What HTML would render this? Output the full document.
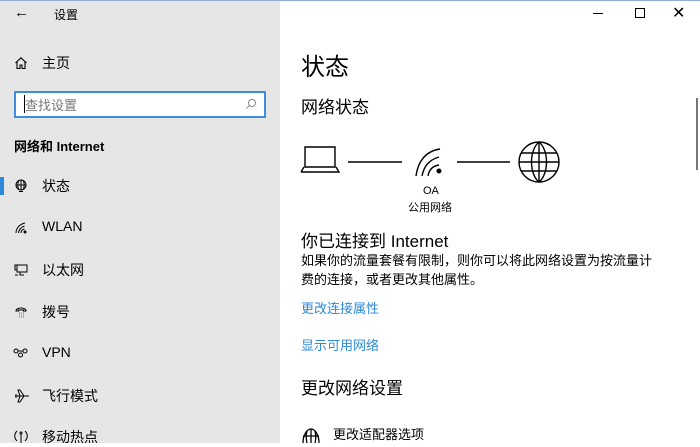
<!DOCTYPE html>
<html><head><meta charset="utf-8"><style>
*{margin:0;padding:0;box-sizing:border-box}
body{width:700px;height:443px;overflow:hidden;position:relative;background:#fff;font-family:"Liberation Sans","Noto Sans CJK SC",sans-serif;color:#000}
.side{position:absolute;left:0;top:0;width:280px;height:443px;background:#e6e6e6}
.t{position:absolute;white-space:nowrap}
.top{position:absolute;left:0;top:0;width:700px;height:1px;background:#8fb0d0}
.nav{position:absolute;left:42px;font-size:14px}
.link{color:#2e8ad8;font-size:13px}
</style></head><body>
<div class="side"></div>
<div class="top"></div>
<div class="t" style="left:14px;top:4px;font-size:15px">&#8592;</div>
<div class="t" style="left:54px;top:6px;font-size:12px">设置</div>
<svg class="t" style="left:14px;top:56px" width="14" height="14" viewBox="0 0 14 14" fill="none" stroke="#000" stroke-width="1.1"><path d="M1.5 7 7 1.8 12.5 7M3 5.8V12.5h3V9h2v3.5h3V5.8"/></svg>
<div class="nav t" style="top:53px">主页</div>
<div class="t" style="left:14px;top:91px;width:252px;height:27px;border:2px solid #3d8ee0;background:#fff"></div>
<div class="t" style="left:24px;top:95px;width:1px;height:18px;background:#000"></div>
<div class="t" style="left:25px;top:95px;font-size:13px;color:#777">查找设置</div>
<svg class="t" style="left:245px;top:98px" width="12" height="12" viewBox="0 0 12 12" fill="none" stroke="#888"><circle cx="7" cy="5" r="3.5"/><path d="M4.5 7.5 1.5 10.5"/></svg>
<div class="t" style="left:14px;top:136px;font-size:13px;font-weight:bold">网络和 Internet</div>
<div class="t" style="left:0;top:177px;width:4px;height:18px;background:#2e8ad8"></div>
<svg class="t" style="left:14px;top:179px" width="14" height="14" viewBox="0 0 14 14" fill="none" stroke="#000"><circle cx="7" cy="6" r="5"/><path d="M2 6h10M7 1v10M4.5 2c-1 3-1 5 0 8M9.5 2c1 3 1 5 0 8M5 12.5h4"/></svg>
<div class="nav t" style="top:176px">状态</div>
<svg class="t" style="left:14px;top:221px" width="14" height="14" viewBox="0 0 14 14" fill="none" stroke="#000"><path d="M2 12c0-5 4-9 9-10M4.5 12c0-3 3-6 6-7M7 12c0-2 1.5-3.5 3.5-4"/><circle cx="11" cy="11" r="1" fill="#000"/></svg>
<div class="nav t" style="top:218px">WLAN</div>
<svg class="t" style="left:14px;top:263px" width="14" height="14" viewBox="0 0 14 14" fill="none" stroke="#000"><path d="M3 2h10v7H3zM1 2h2v5H1zM6 9v3h4M1 12h3"/></svg>
<div class="nav t" style="top:260px">以太网</div>
<svg class="t" style="left:14px;top:305px" width="14" height="14" viewBox="0 0 14 14" fill="none" stroke="#000"><path d="M2 6c0-4 10-4 10 0H9.5V5h-5v1z"/><path d="M5 8h.5M7 8h.5M9 8h.5M5 10h.5M7 10h.5M9 10h.5M5 12h.5M7 12h.5M9 12h.5"/></svg>
<div class="nav t" style="top:302px">拨号</div>
<svg class="t" style="left:13px;top:347px" width="15" height="12" viewBox="0 0 15 12" fill="none" stroke="#000"><circle cx="3" cy="4" r="2"/><circle cx="12" cy="4" r="2"/><circle cx="7.5" cy="8" r="2"/><path d="M5 4h5"/></svg>
<div class="nav t" style="top:344px">VPN</div>
<svg class="t" style="left:14px;top:389px" width="16" height="14" viewBox="0 0 16 14" fill="none" stroke="#000"><path d="M1 7h14M6 7 4 1h2l4 6M6 7 4 13h2l4-6M2 5v4"/></svg>
<div class="nav t" style="top:386px">飞行模式</div>
<svg class="t" style="left:13px;top:429px" width="16" height="14" viewBox="0 0 16 14" fill="none" stroke="#000"><path d="M4 2c-3 3-3 7 0 10M12 2c3 3 3 7 0 10M8 5v9"/><circle cx="8" cy="4" r="1"/></svg>
<div class="nav t" style="top:427px">移动热点</div>

<div class="t" style="left:593px;top:13px;width:10px;height:1px;background:#000"></div>
<div class="t" style="left:635px;top:8px;width:10px;height:10px;border:1px solid #000"></div>
<div class="t" style="left:672px;top:3px;font-size:16px;font-weight:300">✕</div>
<div class="t" style="left:696px;top:98px;width:2px;height:72px;background:#777"></div>

<div class="t" style="left:301px;top:47px;font-size:24px">状态</div>
<div class="t" style="left:301px;top:93px;font-size:17px">网络状态</div>
<svg class="t" style="left:300px;top:140px" width="265" height="50" viewBox="0 0 265 50" fill="none" stroke="#000" stroke-width="1.4">
<path d="M5 7h30v20H5zM1 32h38l-3-5"/><path d="M1 32l3-5"/>
<path d="M48 22h54M157 22h53"/>
<path d="M116 36c2-15 10-25 24-27M122 36c2-10 7-16 17-19M128 36c1-6 4-10 11-11"/>
<circle cx="139" cy="31" r="1.8" fill="#000"/>
<circle cx="239" cy="22" r="20"/><path d="M219 22h40M221 13h36M221 31h36M239 2v40M239 2c-10 8-10 32 0 40M239 2c10 8 10 32 0 40"/>
</svg>
<div class="t" style="left:423px;top:185px;font-size:11px">OA</div>
<div class="t" style="left:408px;top:199px;font-size:11px">公用网络</div>
<div class="t" style="left:301px;top:227px;font-size:17px">你已连接到 Internet</div>
<div class="t" style="left:301px;top:251px;font-size:13px;line-height:19px">如果你的流量套餐有限制，则你可以将此网络设置为按流量计<br>费的连接，或者更改其他属性。</div>
<div class="t link" style="left:301px;top:298px">更改连接属性</div>
<div class="t link" style="left:301px;top:335px">显示可用网络</div>
<div class="t" style="left:301px;top:374px;font-size:17px">更改网络设置</div>
<svg class="t" style="left:301px;top:427px" width="20" height="16" viewBox="0 0 20 16" fill="none" stroke="#000" stroke-width="1.3"><path d="M2 16c0-8 4-14 8-14s8 6 8 14M2 9h16M10 2v14M6 4c-1 4-1 8 0 12M14 4c1 4 1 8 0 12"/></svg>
<div class="t" style="left:333px;top:424px;font-size:13px">更改适配器选项</div>
</body></html>
